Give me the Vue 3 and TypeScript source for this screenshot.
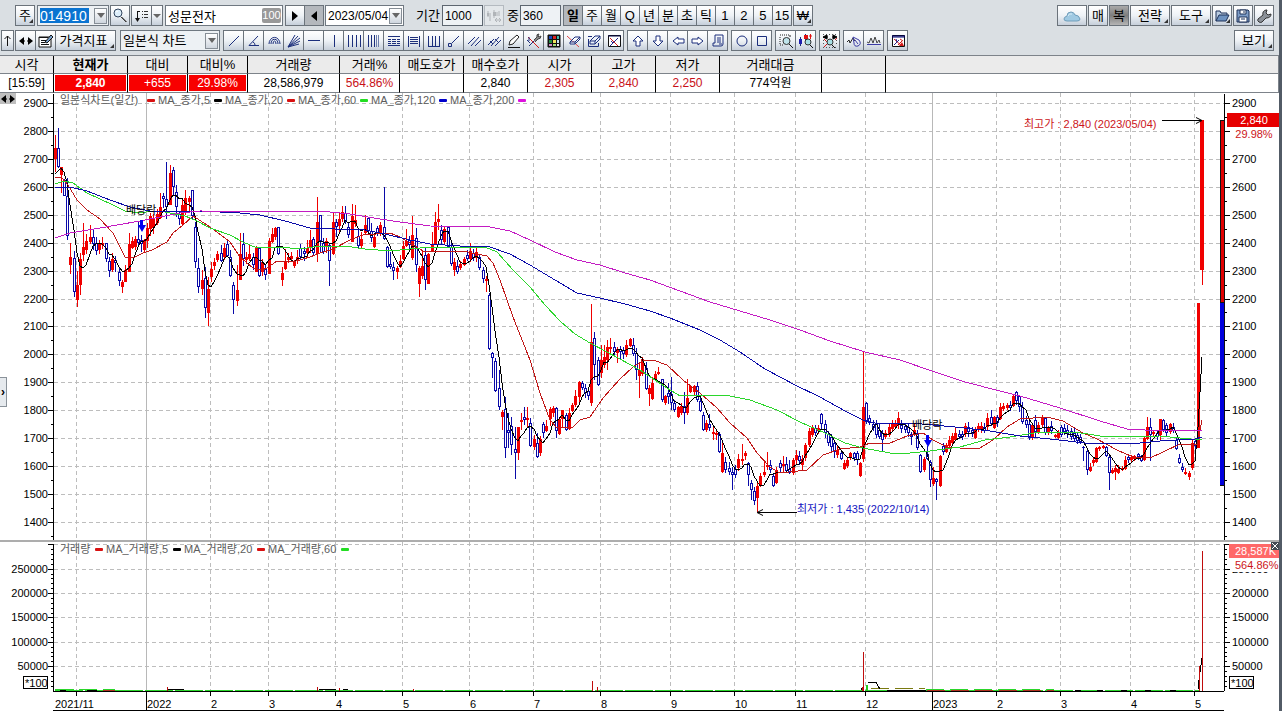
<script setup lang="ts">
import { h, ref } from 'vue'

type Shape = [d: string, stroke?: string, fill?: string]

const NAVY = '#1c2f7c'
const icons: Record<string, Shape[]> = {
  search: [['M9 9l5 5', '#3b3b3b'], ['M10 9l5 5', '#777'], ['M2 5a4 4 0 1 0 8 0a4 4 0 1 0-8 0', '#30435c', '#dceefa'], ['M4 4l2-1', '#fff']],
  sortList: [['M3.500 3v10M6 3.500H3.500', '#111'], ['M1 10h5l-2.500 4z', 'none', '#111'], ['M8 3.500h1M10 3.500h4M8 6.500h1M10 6.500h4M8 9.500h1M10 9.500h4', '#333']],
  play: [['M5 3v10l6-5z', 'none', '#000']],
  back: [['M11 3v10l-6-5z', 'none', '#000']],
  spread: [['M2 3v6M4 5v8M8 2v8M11 4v4M13 3v5M9 12h6M11 10l-2 2l2 2M13 10l2 2l-2 2', '#b0b4b8'], ['M1 5h2v3h-2zM7 4h3v4h-3z', 'none', '#b0b4b8']],
  cloud: [['M5 13q-3 0-3-2q0-2 3-3q0-4 4-4q3 0 4 3q4 0 5 4q0 2-3 2z', '#6f9dba', '#9fc9e2'], ['M6 8q1-3 4-2', '#d8edf7']],
  folder: [['M2 13V3h4l1 2h6v2', '#1d3158', '#b9cbe0'], ['M2 13l3-6h10l-3 6z', '#1d3158', '#6d92c0']],
  save: [['M2 2h11l1 1v11H2z', '#1d3158', '#7d9cc6'], ['M5 2h6v4H5z', '#1d3158', '#fff'], ['M4 9h8v5H4z', '#1d3158', '#fff'], ['M9 3v2M6 11h4', '#1d3158']],
  wrench: [['M3 14q-2-1-1-3l5-4q-1-4 3-5l1 0l-1 3l2 2l3-1q0 4-5 4l-4 4q-1 1-3 0z', '#333', '#8b9198']],
  upThin: [['M5.500 13V3M2.500 6l3-3l3 3', '#111']],
  leftRight: [['M6 4v8l-5-4zM10 4v8l5-4z', 'none', '#000'], ['M5 8h2M9 8h2', '#000']],
  edit: [['M1 4h12v10H1z', '#111', '#fff'], ['M1 4.500h9', '#111'], ['M3 7.500h5M3 9.500h4M3 11.500h8', '#111'], ['M7 9l6-7l2 2l-6 6z', '#111', '#7aa3cf']],
  line: [['M3 13L13 3', NAVY]],
  angle: [['M12 3L3 12.500h10M7 9q2 1 2 3', NAVY]],
  arcs: [['M3 11a5 6 0 0 1 11 0M5 11a3 4 0 0 1 7 0M7 11a1 2 0 0 1 3 0', NAVY]],
  fan: [['M2 14L9 2M2 14L12 3M2 14L14 5M2 14L14 8M2 14L13 11', NAVY]],
  hline: [['M2 7.500h12', NAVY]],
  vline: [['M8.500 2v12', NAVY]],
  bars: [['M2.500 2v12M6.500 2v12M10.500 2v12M14.500 2v12', NAVY]],
  barsDense: [['M2.500 2v12M5.500 2v12M8.500 2v12', NAVY], ['M10.500 2v12M12.500 2v12', '#6d7fae']],
  dashes: [['M2 3.500h12M2 12.500h12', NAVY], ['M2 6.500h3M6 6.500h4M11 6.500h3M2 8.500h3M6 8.500h4M11 8.500h3M2 10.500h3M6 10.500h4M11 10.500h3', NAVY]],
  hlines: [['M2.500 3v11M13.500 3v11M4 4.500h8M4 6.500h8M4 8.500h8M4 10.500h8', NAVY]],
  cup: [['M2.500 3v10M6.500 3v10M9.500 3v10M13.500 3v10M2 13.500h12', NAVY]],
  node: [['M6 10L13 3M2.500 10.500h3v3h-3z', NAVY]],
  diag: [['M2 11L9 4M5 13L13 4M9 13L15 7', NAVY]],
  diagCross: [['M2 12L8 6M5 13L13 4M9 13L15 7M4 8l3 3M9 6l3 3', NAVY]],
  pencil: [['M3 12l1-4l7-6l2 2l-6 7z', '#222', '#fff'], ['M2 14.500h12', '#111']],
  tools: [['M2 4L13 15', '#d31818'], ['M3 13L11 5', NAVY], ['M8 7l3-3q-1-3 2-3l-1 2l1 1l2-1q0 3-3 3l-3 3', '#444', '#888'], ['M3 4v4M1 7l3 3', NAVY]],
  palette: [['M2 2h12v12h-12z', '#111', '#111'], ['M3 3h3v3h-3z', 'none', '#1b49bd'], ['M7 3h3v3h-3z', 'none', '#d22'], ['M11 3h2v3h-2z', 'none', '#41b8ac'], ['M3 7h3v3h-3z', 'none', '#228a42'], ['M7 7h3v3h-3z', 'none', '#f0e15a'], ['M11 7h2v3h-2z', 'none', '#c7e6f7'], ['M3 11h3v2h-3z', 'none', '#d38ac9'], ['M7 11h3v2h-3z', 'none', '#a0dc7a'], ['M11 11h2v2h-2z', 'none', '#eee']],
  eraser: [['M1 3L13 14', '#dd4444'], ['M4 9l5-5h5l-5 5zM4 9v2h5l5-5V4M9 9v2', NAVY, '#fff']],
  eraserBox: [['M2.500 6v7.500h10V10', NAVY], ['M4 8l5-5h5l-5 5zM4 8v3h5l5-5V3M9 8v3', NAVY, '#e8f0fa'], ['M2 3.500h4', NAVY]],
  windowX: [['M2.500 2.500h12v11h-12z', '#111', '#fff'], ['M2 3h13', '#08084a'], ['M4 5l8 8', '#d31818'], ['M4 13l8-8M5 8l2 2', '#25258c']],
  up: [['M8 3l5 5h-3v5h-4v-5h-3z', NAVY, '#fff']],
  down: [['M8 13l5-5h-3v-5h-4v5h-3z', NAVY, '#fff']],
  left: [['M3 8l5-4v2h6v4h-6v2z', NAVY, '#fff']],
  right: [['M13 8l-5-4v2h-6v4h6v2z', NAVY, '#fff']],
  scroll: [['M5 2h8v9q0 2-2 2h-8v-3h2zM7 5h4M7 7h4M7 9h4M9 11h3', NAVY]],
  circle: [['M3 8a5 5 0 1 0 10 0a5 5 0 1 0-10 0', NAVY]],
  square: [['M3.500 3.500h9v9h-9z', NAVY]],
  zoomBox: [['M2 2h1M4 2h1M6 2h1M8 2h1M10 2h1M2 4v1M2 6v1M2 8v1M2 10v1M2 12h1M4 12h1M12 2v2', '#222'], ['M5 8a3 3 0 1 0 7 0a3 3 0 1 0-7 0', '#333', '#bfe3ea'], ['M11 11l4 4', '#1a1a1a']],
  zoomCandle: [['M2.500 4v9M7.500 1v8', NAVY], ['M1 6h3v5h-3z', 'none', '#2020b0'], ['M6 2h4v4h-4z', 'none', '#e01010'], ['M12.500 1v5M11 3h3', '#e01010'], ['M7 9a3 3 0 1 0 6 0a3 3 0 1 0-6 0', '#333', '#a7dfe5'], ['M12 12l3 3', '#111']],
  zoomAll: [['M1 1.500h1M4 1.500h1M7 1.500h1M10 1.500h1M13 1.500h1M1 14.500h1M4 14.500h1M7 14.500h1M10 14.500h1M13 14.500h1M1.500 4v1M1.500 7v1M1.500 10v1M14.500 7v1M14.500 10v1', '#555'], ['M2 14L5 11M13 7l2-2M2 6l3 3', '#d31818'], ['M2 4h4M10 4h4M5 2v4l-4-2zM11 2v4l4-2z', '#000', '#000'], ['M5 9a3 3 0 1 0 6 0a3 3 0 1 0-6 0', '#333', '#a7dfe5'], ['M10 12l3 3', '#111']],
  waveCircle: [['M1 9l2-2l1 3l3-5l2 3', '#222'], ['M7 4l6 3q3 4-1 6q-4 1-4-3zM9 7l3 4', '#3b3ba5']],
  wave: [['M1 9l2 1l2-5l2 5l2-6l2 6l2-3l1 3', '#444'], ['M1 11.500h14', '#3b3ba5']],
  windowRed: [['M2.500 2.500h12v11h-12z', '#111', '#fff'], ['M2 3h13M2 4h13', '#00006a'], ['M4 6l8 7M10 6l3 2M8 12l4-4', '#d31818'], ['M4 12l5-5M6 6l1 3', '#25258c'], ['M9 13l3-4l2 4z', 'none', '#d31818']],
}

const Icon = (p: { name: string; w?: number }) =>
  h('svg', { class: 'icon', width: p.w ?? 16, height: 16, viewBox: `0 0 ${p.w ?? 16} 16`, 'aria-hidden': 'true' },
    icons[p.name].map(([d, stroke, fill]) => h('path', { d, stroke: stroke ?? '#000', fill: fill ?? 'none' })))
Icon.props = ['name', 'w']

const drawGroups: string[][] = [
  ['line', 'angle', 'arcs', 'fan', 'hline', 'vline', 'bars', 'barsDense', 'dashes', 'hlines', 'cup', 'node', 'diag', 'diagCross', 'pencil', 'tools', 'palette', 'eraser', 'eraserBox', 'windowX'],
  ['up', 'down', 'left', 'right', 'scroll'],
  ['circle', 'square'],
  ['zoomBox', 'zoomCandle'],
  ['zoomAll'],
  ['waveCircle', 'wave'],
  ['windowRed'],
]

const periods = ['일', '주', '월', 'Q', '년', '분', '초', '틱', '1', '2', '5', '15']
const period = ref('일')
const code = ref('014910')
const stockName = ref('성문전자')
const date = ref('2023/05/04')
const total = ref('1000')
const shown = ref('360')

interface Quote { label: string; value: string; tone?: string; col: string }
const quotes: Quote[] = [
  { label: '시각', value: '[15:59]', col: 'w54' },
  { label: '현재가', value: '2,840', tone: 'solid strong', col: 'w74' },
  { label: '대비', value: '+655', tone: 'solid', col: 'w60' },
  { label: '대비%', value: '29.98%', tone: 'solid', col: 'w60' },
  { label: '거래량', value: '28,586,979', col: 'w92' },
  { label: '거래%', value: '564.86%', tone: 'rise', col: 'w60' },
  { label: '매도호가', value: '', col: 'w64' },
  { label: '매수호가', value: '2,840', col: 'w64' },
  { label: '시가', value: '2,305', tone: 'rise', col: 'w64' },
  { label: '고가', value: '2,840', tone: 'rise', col: 'w64' },
  { label: '저가', value: '2,250', tone: 'rise', col: 'w64' },
  { label: '거래대금', value: '774억원', col: 'w102' },
  { label: '', value: '', col: 'w64' },
  { label: '', value: '', col: 'rest' },
]

const LEFT = 53
const RIGHT = 1224
const months = [
  { x: 76, t: '2021/11', tx: 55 }, { x: 146, t: '2022', year: true }, { x: 210, t: '2' }, { x: 268, t: '3' },
  { x: 335, t: '4' }, { x: 402, t: '5' }, { x: 469, t: '6' }, { x: 533, t: '7' }, { x: 600, t: '8' },
  { x: 670, t: '9' }, { x: 734, t: '10' }, { x: 795, t: '11' }, { x: 865, t: '12' }, { x: 932, t: '2023', year: true },
  { x: 996, t: '2' }, { x: 1060, t: '3' }, { x: 1130, t: '4' }, { x: 1194, t: '5' },
]

const priceY = (p: number) => Math.round(103 + (2900 - p) * 0.2793)
const prices = Array.from({ length: 16 }, (_, i) => 2900 - i * 100)
const priceMinor = Array.from({ length: 16 }, (_, i) => 2850 - i * 100)
const volY = (v: number) => Math.round(690.500 - v * 0.000487)
const volumes = [250000, 200000, 150000, 100000, 50000]
const volMinor = Array.from({ length: 30 }, (_, i) => (i + 1) * 10000)

// One entry per day: direction + x, high, body top, body bottom, low.
const daily = `
r55,135,148,159,172 b58,128,148,167,168 r61,167,167,175,193 b64,179,180,196,196 b67,178,196,236,240 r70,243,257,265,274
b74,251,258,292,297 r77,271,285,300,307 r80,253,259,285,295 r83,223,247,255,261 r86,234,241,250,254 r90,225,237,242,244
b93,229,237,244,250 b96,237,243,251,255 r99,240,244,250,254 r102,237,243,245,249 b106,243,243,259,262 b109,257,261,271,277
r112,253,259,270,272 b115,256,260,263,272 b119,268,272,281,286 r122,280,282,287,293 r125,265,270,282,282 r129,233,244,272,272
r132,237,241,248,249 r135,236,239,247,250 b138,222,239,243,247 b141,235,240,244,252 r144,239,240,250,252 r147,223,228,241,248
r150,213,216,229,236 r153,214,218,228,234 r157,209,214,223,225 r160,193,207,218,219 b163,193,196,199,208 b166,162,199,207,219
r170,165,173,205,205 b173,167,170,187,196 b176,185,192,207,217 b179,212,214,219,225 r182,198,205,224,225 r185,190,198,213,215
r189,196,198,202,212 b192,190,190,216,219 b195,222,227,262,268 b198,258,268,287,293 r202,270,280,289,295 b205,267,278,308,318
r208,277,289,313,326 r211,262,269,277,282 r214,258,262,266,270 r217,251,254,260,262 b221,245,253,261,262 r224,243,248,257,260
b227,241,244,256,257 b230,250,257,276,277 b233,282,285,300,314 r237,265,290,301,306 r240,233,254,280,280 b243,233,244,259,266
r246,252,257,260,264 r249,245,254,259,261 b253,253,257,265,270 r256,246,248,272,272 b259,247,248,276,277 r262,259,262,272,276
b265,264,269,275,280 r269,238,241,274,274 r272,228,234,242,243 r275,227,228,237,240 b278,227,227,254,255 r282,267,273,280,286
r285,249,262,269,270 r288,253,257,260,263 r291,252,256,259,262 r294,260,262,266,268 r297,250,257,260,264 b300,244,248,257,260
b304,247,251,254,261 r307,240,248,253,257 r310,230,240,248,253 b313,237,239,253,255 r317,197,222,254,262 b320,215,215,241,252
b323,238,243,252,254 r326,238,241,246,253 b329,243,245,261,286 r333,212,222,254,255 b336,219,222,227,237 r339,212,219,226,232
r342,206,212,219,222 b345,206,213,221,224 b348,222,227,235,238 r352,204,216,242,242 r355,205,220,224,227 b358,230,236,246,249
r361,232,239,246,248 r365,215,225,233,234 b368,217,218,231,233 b371,223,231,238,242 r374,235,237,247,248 b377,226,228,234,236
r380,222,225,234,236 b384,187,227,239,240 b387,246,247,267,268 b390,252,264,267,269 b393,262,267,271,280 r397,266,268,272,279
r400,255,261,267,268 r403,241,246,259,260 r406,229,241,246,247 b409,236,240,245,250 r412,216,235,258,260 b416,228,238,265,272
r419,266,268,284,297 r422,250,266,276,279 b425,248,255,280,290 r428,253,254,284,284 r432,232,245,251,252 r435,212,222,244,245
r438,204,219,222,230 b441,225,230,240,244 r444,226,229,242,244 b448,227,227,247,248 b451,240,247,264,266 r454,258,262,270,276
b457,260,266,272,274 r460,261,264,268,270 r464,257,259,265,266 b467,250,255,259,261 r470,243,251,259,262 b473,249,253,258,261
r476,248,252,258,262 b479,255,257,268,270 b483,267,270,279,283 r486,276,279,281,292 b489,293,295,349,350 b492,352,353,358,378
b495,358,361,391,392 b499,370,388,407,410 r502,410,412,417,430 b505,397,409,448,458 b508,413,430,433,448 b511,417,426,445,455
b515,427,449,453,479 r518,427,427,453,460 r521,413,420,422,430 b524,407,417,420,425 r527,407,418,420,427 b530,418,423,446,447
r534,435,439,447,450 b537,433,443,457,458 r540,436,439,453,456 b543,422,424,433,438 r546,420,426,431,432 r550,407,409,419,426
r553,406,408,413,417 b556,407,408,431,438 r559,417,419,434,435 r562,410,410,419,428 b566,413,415,430,431 r569,408,413,429,430
r572,403,405,411,412 r575,390,396,405,407 r579,381,382,397,402 b582,381,383,388,390 b585,384,388,393,398 b588,387,391,396,400
r591,304,342,403,406 b594,332,338,365,380 b598,357,360,385,386 r601,345,360,373,378 r604,345,357,365,368 r607,340,347,360,370
r610,338,347,349,353 b614,342,347,352,355 r617,347,349,353,363 b620,346,349,352,360 b623,347,350,354,359 r626,340,345,355,357
r630,338,339,346,347 b633,338,345,354,356 b636,348,353,370,380 r639,363,370,376,398 r642,357,359,374,376 b646,362,368,389,390
r649,385,388,394,406 r652,377,383,399,400 r655,371,374,379,380 r658,367,372,374,375 b662,379,379,400,402 r665,395,396,403,405
b668,383,393,397,404 b671,377,394,403,410 b674,400,403,410,412 r678,406,407,417,418 r681,403,406,413,415 b684,392,406,413,424
r687,379,398,413,415 r690,385,386,392,393 r694,385,386,392,396 b697,382,386,400,402 b700,395,401,411,412 b703,412,415,430,431
r706,420,423,430,432 b709,414,424,428,431 r713,427,432,434,440 r716,431,433,435,440 b719,432,434,452,453 r722,443,453,472,473
b725,457,462,470,473 b729,462,468,472,475 b732,467,472,475,490 b735,465,469,475,478 r738,454,459,468,471 r742,444,459,461,465
r745,451,453,456,460 b748,462,463,475,486 b751,480,483,490,500 b754,487,491,501,505 r757,482,486,498,512 r760,473,476,485,487
r764,462,472,475,477 r767,452,465,467,470 b770,460,465,470,473 b773,474,476,486,487 r776,467,470,483,484 b780,460,463,468,472
r783,456,464,466,472 b786,457,464,471,473 b789,460,469,473,474 r793,458,460,473,475 r796,450,455,460,465 b799,451,456,461,465
r802,455,459,465,471 r805,443,445,458,461 r809,428,431,445,447 r812,425,427,435,437 b815,425,428,433,436 r818,425,428,431,434
b821,413,414,424,430 b825,420,424,433,438 b828,431,434,443,446 b831,434,437,447,453 b834,440,443,452,458 r837,445,450,455,458
b841,452,453,459,460 r844,460,463,469,470 r847,458,460,466,468 r850,452,453,458,460 b854,452,453,458,461 b857,451,453,460,465
r860,462,463,476,477 r863,352,407,459,462 b866,402,403,421,424 b869,415,418,423,425 b873,420,424,428,431 b876,420,424,435,438
b879,424,430,437,439 b882,430,433,440,452 r885,430,433,437,439 r889,423,427,435,437 r892,420,423,429,431 r895,420,423,427,428
r898,412,418,425,429 b901,420,425,429,433 b905,423,426,430,433 b908,424,427,433,437 b911,432,434,437,445 r914,423,430,434,436
b917,430,433,448,450 b920,454,455,472,473 r924,457,459,470,472 b927,446,454,459,460 b930,460,462,480,487 r933,467,478,484,486
b936,478,479,482,500 r940,455,456,486,487 b943,443,446,452,455 r946,443,445,452,453 r949,436,440,446,448 r952,433,436,443,445
r955,427,433,440,441 b959,430,434,437,439 b962,431,434,437,440 r965,423,426,434,437 b968,422,427,432,437 b972,427,430,434,437
r975,427,429,438,439 r978,423,426,430,432 r981,422,426,430,433 b984,423,427,431,433 r987,413,418,427,430 b991,410,417,424,426
r994,416,417,428,429 b997,415,417,423,427 r1000,403,407,419,420 r1003,403,406,409,411 r1007,403,405,408,410 b1010,401,405,408,411
r1013,395,396,406,407 b1016,391,392,401,405 b1019,395,396,407,412 b1022,402,407,422,424 b1026,416,420,425,428 b1029,420,424,438,440
r1032,423,425,438,440 b1035,415,420,432,437 r1038,422,425,432,434 r1042,415,418,425,427 b1045,417,418,433,435 r1048,426,428,433,435
b1051,421,426,431,434 r1055,434,435,437,438 r1058,430,432,438,439 b1061,425,427,435,437 b1064,424,428,432,435 b1067,425,430,434,438
b1071,428,431,437,440 b1074,427,433,439,442 b1077,432,435,441,444 b1080,434,437,442,444 b1083,446,447,448,461 b1087,450,451,470,475
r1090,463,467,471,472 r1093,458,460,463,466 r1096,447,448,462,463 r1099,446,447,449,451 r1103,445,446,448,449 b1106,446,447,456,457
b1109,456,457,473,490 r1112,468,470,473,474 r1115,465,468,472,480 r1118,465,469,473,474 r1122,466,468,470,471 r1125,456,460,469,470
b1128,455,457,460,463 r1131,455,457,460,463 r1134,455,456,459,461 b1138,453,454,457,460 b1141,455,456,461,462 r1144,437,438,460,461
r1147,417,427,439,440 b1150,418,427,435,461 r1153,430,432,434,437 b1157,431,433,437,440 r1160,419,419,435,440 b1163,419,420,430,432
b1166,423,425,433,437 r1170,423,424,432,434 b1173,423,427,431,433 b1176,438,440,449,450 b1179,454,458,463,464 b1182,463,467,470,472
r1185,468,472,474,475 r1189,471,473,477,480 r1192,440,443,468,470 b1195,438,441,446,452 r1198,303,303,448,448 r1202,120,120,270,285`

interface Candle { up: boolean; x: number; hi: number; top: number; bot: number; lo: number; close: number }
const candles: Candle[] = daily.trim().split(/\s+/).map((s) => {
  const [x, hi, top, bot, lo] = s.slice(1).split(',').map(Number)
  const up = s[0] === 'r'
  return { up, x, hi, top, bot, lo, close: up ? top : bot }
})
const box = (x: number, y: number, w: number, ht: number) => `M${x} ${y}h${w}v${ht}h${-w}z`
const shape = (up: boolean) => candles.filter((c) => c.up === up)
  .map((c) => box(c.x, c.hi, 1, Math.max(1, c.lo - c.hi)) + box(c.x - 1, c.top, 3, Math.max(1, c.bot - c.top))).join('')
const upPath = shape(true) + box(1200, 120, 4, 150) + box(1197, 303, 3, 145)
const downPath = shape(false)
const hollowPath = candles.filter((c) => !c.up && c.bot - c.top > 2)
  .map((c) => box(c.x, c.top + 1, 1, c.bot - c.top - 2)).join('')

const ma5 = candles.map((c, i) => {
  const part = candles.slice(Math.max(0, i - 4), i + 1)
  const sum = part.reduce((s, k) => s + k.close, 0)
  return `${c.x},${Math.round((sum + 180 * (5 - part.length)) / 5)}`
}).join(' ')

const averages = [
  { c: '#000', p: ma5 },
  { c: '#c01818', p: '55,177 62,178 68,185 77,200 87,210 100,219 113,233 125,257 133,258 143,253 152,250 167,242 173,233 183,225 193,216 207,225 217,232 230,242 240,257 253,268 262,270 267,268 277,261 293,262 310,257 320,253 333,249 350,240 363,235 390,233 400,237 410,243 423,251 463,251 477,254 487,256 493,263 500,280 513,317 530,360 540,393 550,420 557,428 573,427 580,420 590,417 603,398 620,379 633,367 643,361 653,360 667,365 683,380 700,393 717,408 730,423 747,438 757,453 770,467 780,473 807,470 823,455 840,449 860,447 870,443 890,443 907,436 923,433 933,440 947,447 960,448 980,448 993,440 1007,427 1020,419 1047,417 1063,421 1083,433 1097,439 1117,450 1133,457 1150,458 1163,452 1180,444 1197,445 1200,430 1202,420' },
  { c: '#2bd62b', p: '55,184 64,181 73,183 87,193 100,199 113,205 125,211 140,213 153,211 165,212 185,216 197,221 210,228 230,235 243,242 257,248 280,247 300,249 320,246 345,246 365,249 390,251 420,248 450,247 485,247 497,252 513,270 530,287 545,305 560,321 575,334 590,343 605,351 620,359 640,370 655,380 667,388 680,396 700,395 730,396 750,400 777,410 800,422 825,433 845,443 863,448 890,453 910,453 930,451 960,447 985,440 1010,437 1040,432 1075,432 1100,436 1120,437 1160,436 1180,438 1202,440' },
  { c: '#0b0ba8', p: '55,188 70,187 87,191 110,200 130,207 150,211 175,211 200,211 240,213 260,215 285,221 310,228 335,229 360,229 385,234 410,240 430,244 460,246 490,247 510,254 530,265 555,280 577,293 600,298 625,304 650,311 670,318 700,330 720,340 740,352 765,369 795,385 820,397 845,411 865,421 875,423 910,423 933,425 955,427 990,431 1020,436 1050,439 1085,443 1140,443 1160,441 1195,439 1202,437' },
  { c: '#c31bc3', p: '55,238 70,233 100,228 140,221 165,216 180,213 200,211 330,212 350,214 380,219 400,222 430,226 490,227 510,231 530,240 555,252 577,260 600,265 625,273 650,280 680,291 710,302 740,311 770,320 800,330 830,341 865,352 900,360 935,372 965,382 1000,391 1020,396 1060,408 1100,421 1127,429 1145,430 1170,430 1202,430' },
]

const priceLegend = [
  { x: 60, t: '일본식차트(일간)', m: 147, c: '#d81010' }, { x: 158, t: 'MA_종가,5', m: 214, c: '#000' },
  { x: 225, t: 'MA_종가,20', m: 287, c: '#d81010' }, { x: 298, t: 'MA_종가,60', m: 360, c: '#22dd22' },
  { x: 371, t: 'MA_종가,120', m: 439, c: '#0000cc' }, { x: 450, t: 'MA_종가,200', m: 518, c: '#dd11dd' },
]
const volLegend = [
  { x: 60, t: '거래량', m: 95, c: '#d81010' }, { x: 106, t: 'MA_거래량,5', m: 173, c: '#000' },
  { x: 184, t: 'MA_거래량,20', m: 257, c: '#d81010' }, { x: 268, t: 'MA_거래량,60', m: 341, c: '#22dd22' },
]
const exDays = [{ x: 141, y: 214 }, { x: 927, y: 429 }]
const spikes = [[167, 687], [317, 687], [339, 688], [413, 689], [592, 681], [597, 687], [863, 652], [862, 687], [1199, 666], [1202, 551]]
</script>

<template>
  <main class="window">
    <header class="tools">
      <div class="row">
        <button class="btn more first">주</button>
        <div class="combo code">
          <input v-model="code" aria-label="종목코드" class="picked" />
          <button class="drop" aria-label="종목 목록"></button>
        </div>
        <button class="btn sq" aria-label="종목 검색"><Icon name="search" /></button>
        <div class="group">
          <button class="btn" aria-label="정렬"><Icon name="sortList" /></button>
          <button class="btn slim" aria-label="정렬 목록"><span class="tri"></span></button>
        </div>
        <div class="combo name">
          <input v-model="stockName" aria-label="종목명" />
          <span class="badge">100</span>
        </div>
        <div class="group gap">
          <button class="btn sq" aria-label="다음"><Icon name="play" /></button>
          <button class="btn sq on" aria-label="이전"><Icon name="back" /></button>
        </div>
        <div class="combo date">
          <input v-model="date" aria-label="날짜" />
          <button class="drop" aria-label="달력"></button>
        </div>
        <label class="lbl far" for="total">기간</label>
        <input id="total" v-model="total" class="box" />
        <button class="btn sq faint" aria-label="간격" disabled><Icon name="spread" /></button>
        <label class="lbl mid" for="shown">중</label>
        <input id="shown" v-model="shown" class="box" />
        <div class="group periods">
          <button v-for="p in periods" :key="p" class="btn" :class="{ on: p === period }" @click="period = p">{{ p }}</button>
        </div>
        <button class="btn more sq">₩</button>
        <div class="end">
          <button class="btn wide30" aria-label="클라우드"><Icon name="cloud" :w="20" /></button>
          <button class="btn sq">매</button>
          <button class="btn sq dark">복</button>
          <button class="btn more wide41">전략</button>
          <button class="btn more wide41">도구</button>
          <button class="btn more sq" aria-label="열기"><Icon name="folder" /></button>
          <button class="btn sq" aria-label="저장"><Icon name="save" /></button>
          <button class="btn sq" aria-label="설정"><Icon name="wrench" /></button>
        </div>
      </div>
      <div class="row second">
        <button class="btn slim13" aria-label="위로"><Icon name="upThin" :w="11" /></button>
        <div class="group">
          <button class="btn" aria-label="좌우"><Icon name="leftRight" /></button>
          <button class="btn" aria-label="편집"><Icon name="edit" /></button>
          <button class="btn more index">가격지표</button>
        </div>
        <div class="combo kind">
          <select aria-label="차트 종류"><option>일본식 차트</option></select>
          <span class="drop" aria-hidden="true"></span>
        </div>
        <div v-for="(g, i) in drawGroups" :key="i" class="group draw">
          <button v-for="n in g" :key="n" class="btn" :aria-label="n"><Icon :name="n" /></button>
        </div>
        <div class="end"><button class="btn more wide41">보기</button></div>
      </div>
    </header>

    <table class="quote">
      <colgroup><col v-for="(q, i) in quotes" :key="i" :class="q.col" /></colgroup>
      <thead>
        <tr><th v-for="(q, i) in quotes" :key="i" scope="col" :class="{ strong: i === 1 }">{{ q.label }}</th></tr>
      </thead>
      <tbody>
        <tr><td v-for="(q, i) in quotes" :key="i"><span :class="q.tone">{{ q.value }}</span></td></tr>
      </tbody>
    </table>

    <section class="pane">
      <svg class="chart" viewBox="0 93 1279 447" role="img" aria-label="일본식차트(일간)">
        <g class="crisp">
          <path v-for="p in prices" :key="p" class="grid" :d="`M54 ${priceY(p)}.5H${RIGHT}`" />
          <path v-for="m in months" :key="m.x" :class="m.year ? 'yearline' : 'grid'" :d="`M${m.x}.5 93V540`" />
          <path :d="upPath" fill="#f00000" />
          <path :d="downPath" fill="#0a0aa8" />
          <path :d="hollowPath" fill="#fff" />
          <polyline v-for="a in averages" :key="a.c" :points="a.p" fill="none" :stroke="a.c" />
          <path class="axis" :d="`M${LEFT}.5 94V540M${RIGHT}.5 94V540`" />
          <path v-for="p in prices" :key="p" class="axis" :d="`M48 ${priceY(p)}.5H53M${RIGHT} ${priceY(p)}.5h6`" />
          <path v-for="p in priceMinor" :key="p" class="axis" :d="`M51 ${priceY(p)}.5H53M${RIGHT} ${priceY(p)}.5h3`" />
          <rect x="1220" y="120" width="5" height="183" fill="#111" />
          <rect x="1221" y="121" width="3" height="181" fill="#e00000" />
          <rect x="1220" y="302" width="5" height="184" fill="#111" />
          <rect x="1220" y="303" width="4" height="182" fill="#0000dd" />
          <rect x="1227" y="113" width="52" height="14" fill="#e60000" />
        </g>
        <g>
          <text v-for="p in prices" :key="p" class="num" x="48" :y="priceY(p) + 4" text-anchor="end">{{ p }}</text>
          <template v-for="p in prices" :key="p">
            <text v-if="p !== 2800" class="num" x="1232" :y="priceY(p) + 4">{{ p }}</text>
          </template>
          <text class="num white" x="1254" y="124" text-anchor="middle">2,840</text>
          <text class="num red" x="1254" y="138" text-anchor="middle">29.98%</text>
          <g v-for="l in priceLegend" :key="l.x">
            <text class="legend" :x="l.x" y="104">{{ l.t }}</text>
            <rect :x="l.m" y="99" width="8" height="3" rx="1" :fill="l.c" />
          </g>
          <text class="note red" x="1024" y="128">최고가 : 2,840 (2023/05/04)</text>
          <path class="arrow" d="M1162 120.500H1201M1196 117.500l6 3l-6 3" />
          <text class="note blue" x="797" y="513">최저가 : 1,435 (2022/10/14)</text>
          <path class="arrow" d="M797 512.500H758M763 509.500l-6 3l6 3" />
          <g v-for="e in exDays" :key="e.x">
            <text class="note" :x="e.x - 15" :y="e.y">배당락</text>
            <path :d="`M${e.x - 1} ${e.y + 6}h3v5h3l-4 7l-4 -7h2z`" fill="#0000f0" />
          </g>
        </g>
      </svg>
      <button class="flip" aria-label="좌우 이동"><Icon name="leftRight" /></button>
      <button class="expand" aria-label="펼치기">›</button>
    </section>
    <div class="split"></div>
    <section class="pane">
      <svg class="chart" viewBox="0 542 1279 169" role="img" aria-label="거래량">
        <g class="crisp">
          <path class="grid" :d="`M54 544.500H${RIGHT}`" />
          <path v-for="v in volumes" :key="v" class="grid" :d="`M54 ${volY(v)}.5H${RIGHT}`" />
          <path v-for="m in months" :key="m.x" :class="m.year ? 'yearline' : 'grid'" :d="`M${m.x}.5 542V691`" />
          <path class="axis" :d="`M${LEFT}.5 544V691M${RIGHT}.5 544V691M48 544.500H53M${RIGHT} 544.500h5`" />
          <path v-for="v in volumes" :key="v" class="axis" :d="`M48 ${volY(v)}.5H53M${RIGHT} ${volY(v)}.5h6`" />
          <path v-for="v in volMinor" :key="v" class="axis" :d="`M51 ${volY(v)}.5H53M${RIGHT} ${volY(v)}.5h3`" />
          <path class="axis" d="M53 691.500H1224M53 710.500H1224" />
          <path v-for="m in months" :key="m.x" class="axis" :d="`M${m.x}.5 691V${m.year ? 710 : 696}`" />
          <path d="M55 689.500H74M79 689.500H97M103 689.500H115" stroke="#2bd62b" />
          <path d="M55 690.500H1200" stroke="#2bd62b" stroke-dasharray="28 2" />
          <path d="M60 690.500H66M87 690.500H97M168 689.500H184M319 689.500H336M343 689.500H348M887 690.500H926M1075 690.500h6M1097 690.500h6M1121 690.500h6M1145 690.500h6M1170 690.500h6" stroke="#000" />
          <path d="M103 690.500H115M927 690.500H1054" stroke="#b03020" stroke-dasharray="18 6" />
          <path d="M871 688.500H925" stroke="#7a7a10" stroke-dasharray="18 6" />
          <path d="M926 689.500H1054" stroke="#2bd62b" stroke-dasharray="18 6" />
          <rect x="866" y="685" width="2" height="6" fill="#22cc22" />
          <path d="M861 690L864 686M868 682.500H876L880 689M1198 689L1200 672L1202 658" fill="none" stroke="#000" />
          <path v-for="s in spikes" :key="s[0]" :d="`M${s[0]}.5 ${s[1]}V691`" stroke="#c00c0c" />
        </g>
        <g>
          <text v-for="v in volumes" :key="v" class="num" x="48" :y="volY(v) + 4" text-anchor="end">{{ v }}</text>
          <text v-for="v in volumes" :key="v" class="num" x="1232" :y="volY(v) + 4">{{ v }}</text>
          <rect x="1231" y="558" width="48" height="14" fill="#fff" />
          <rect x="1229" y="544" width="50" height="14" fill="#ff6868" />
          <text class="num white" x="1235" y="555">28,587K</text>
          <text class="num red" x="1235" y="569">564.86%</text>
          <rect class="factor" x="23.500" y="676.500" width="24" height="12" />
          <text class="num" x="25" y="687">*100</text>
          <rect class="factor" x="1229.500" y="676.500" width="24" height="12" />
          <text class="num" x="1231" y="687">*100</text>
          <text v-for="m in months" :key="m.x" class="num" :x="m.tx ?? m.x + 1" y="708">{{ m.t }}</text>
          <g v-for="l in volLegend" :key="l.x">
            <text class="legend" :x="l.x" y="553">{{ l.t }}</text>
            <rect :x="l.m" y="548" width="8" height="3" rx="1" :fill="l.c" />
          </g>
        </g>
      </svg>
      <button class="close" aria-label="닫기">
        <svg viewBox="0 0 8 8" width="8" height="8"><path d="M1 1l6 6M7 1l-6 6" stroke="#fff" /></svg>
      </button>
    </section>
  </main>
</template>

<style>
body {
  margin: 0;
  background: #fff;
}
</style>

<style scoped>
.window {
  border-right: 3px solid #525b66;
  background: #fff;
  font-family: "Liberation Sans", "Noto Sans CJK KR", sans-serif;
  font-size: 12px;
  color: #000;
  overflow: hidden;
}
* {
  box-sizing: border-box;
}
button,
input,
select {
  font: inherit;
  color: inherit;
  margin: 0;
  padding: 0;
}
.tools {
  background: #dadfe3;
  padding: 5px 5px 4px 0;
}
.row {
  display: flex;
  align-items: center;
  height: 21px;
  gap: 1px;
  white-space: nowrap;
}
.second {
  margin-top: 4px;
  padding-left: 1px;
}
.btn {
  position: relative;
  flex: none;
  display: inline-flex;
  align-items: center;
  justify-content: center;
  width: 21px;
  height: 21px;
  border: 1px solid #6b737b;
  border-radius: 0;
  background: linear-gradient(#ffffff, #eef2f6 50%, #c6cfda);
  font-size: 13px;
  line-height: 18px;
}
.btn.sq {
  width: 20px;
}
.btn.on {
  background: #b4b8bd;
  font-weight: bold;
}
.btn.dark {
  background: linear-gradient(#a9a9a9, #7d7d7d 50%, #b5b5b5);
}
.btn.faint {
  border-color: #b4bac0;
  background: #e3e7ea;
}
.btn.more::after {
  content: "";
  position: absolute;
  right: 1px;
  bottom: 2px;
  border: 2px solid;
  border-color: transparent #333 #333 transparent;
}
.first {
  width: 20px;
  margin-left: 15px;
  margin-right: 1px;
}
.btn.slim {
  width: 12px;
}
.btn.slim13 {
  width: 13px;
}
.btn.wide30 {
  width: 30px;
}
.btn.wide41 {
  width: 40px;
}
.btn.index {
  width: 61px;
  padding-right: 4px;
}
.icon {
  flex: none;
  display: block;
}
.group {
  display: flex;
}
.group .btn + .btn {
  margin-left: -1px;
}
.gap {
  margin-left: 1px;
}
.draw {
  margin-left: 2px;
}
.tri {
  border: 4px solid transparent;
  border-top-color: #666;
  border-bottom: 0;
}
.combo {
  display: flex;
  align-items: center;
  height: 21px;
  border: 1px solid #6f7881;
  background: #fff;
  padding: 1px 1px 1px 2px;
}
.combo input {
  flex: 1;
  min-width: 0;
  width: 0;
  height: 17px;
  border: 0;
  background: none;
}
.combo .drop {
  flex: none;
  display: flex;
  align-items: center;
  justify-content: center;
  width: 13px;
  height: 16px;
  border: 1px solid #868e96;
  background: linear-gradient(#fff, #cfd6de);
}
.drop::before {
  content: "";
  border: 4px solid transparent;
  border-top: 5px solid #666;
  border-bottom: 0;
}
.code {
  width: 72px;
  background: #edf1f4;
}
.combo input.picked {
  flex: none;
  width: 49px;
  height: 15px;
  margin-right: auto;
  background: #0a74d1;
  color: #fff;
  font-size: 14px;
}
.name {
  width: 118px;
  margin-left: 1px;
}
.name input {
  font-size: 13px;
}
.badge {
  background: #999;
  color: #fff;
  border-radius: 2px;
  width: 19px;
  height: 15px;
  line-height: 15px;
  font-size: 11px;
  text-align: center;
}
.date {
  width: 79px;
}
.lbl {
  font-size: 13px;
  line-height: 18px;
}
.far {
  margin: 0 1px 0 11px;
}
.mid {
  margin: 0 0 0 2px;
}
.box {
  width: 41px;
  height: 21px;
  border: 1px solid #5d6670;
  border-radius: 0;
  background: #eef2f5;
  padding-left: 2px;
}
.periods {
  margin-left: 1px;
}
.periods .btn {
  width: 20px;
}
.end {
  margin-left: auto;
  display: flex;
  gap: 1px;
}
.kind {
  width: 100px;
  margin-left: 3px;
  background: #edf1f4;
}
.kind select {
  flex: 1;
  min-width: 0;
  border: 0;
  background: none;
  appearance: none;
  font-size: 13px;
  line-height: 16px;
  height: 17px;
}
.quote {
  width: 100%;
  table-layout: fixed;
  border-collapse: separate;
  border-spacing: 0;
  border-top: 1px solid #7d838a;
  border-right: 1px solid #7d838a;
  line-height: 16px;
}
.quote th,
.quote td {
  padding: 1px 0 0;
  text-align: center;
  font-weight: normal;
  border-right: 1px solid #000;
  border-bottom: 1px solid #7d838a;
  white-space: nowrap;
}
.quote th {
  height: 18px;
  background: #ebebeb;
  font-size: 13px;
}
.quote th.strong {
  font-weight: bold;
}
.quote td {
  height: 19px;
  padding: 1px;
}
.quote th:last-child,
.quote td:last-child {
  border-right: 0;
}
.quote span {
  display: block;
  height: 16px;
}
.solid {
  background: #f80000;
  color: #fff;
}
.quote .strong {
  font-weight: bold;
}
.quote .rise {
  color: #c81018;
}
.w54 { width: 54px; }
.w74 { width: 74px; }
.w60 { width: 60px; }
.w92 { width: 92px; }
.w64 { width: 64px; }
.w102 { width: 102px; }
.pane {
  position: relative;
}
.chart {
  display: block;
  width: 100%;
  height: auto;
}
.crisp {
  shape-rendering: crispEdges;
}
.grid {
  stroke: #bdbdbd;
  stroke-dasharray: 4 3;
}
.yearline {
  stroke: #b8b8b8;
}
.axis {
  stroke: #000;
}
.arrow {
  stroke: #000;
  fill: none;
}
.num,
.note,
.legend {
  font-size: 11px;
}
.legend {
  fill: #5c5c5c;
}
.red {
  fill: #cc1420;
}
.blue {
  fill: #1414c0;
}
.white {
  fill: #fff;
}
.factor {
  fill: #fff;
  stroke: #000;
}
.split {
  height: 2px;
  background: #adadad;
}
.flip {
  position: absolute;
  left: 0;
  top: 0;
  width: 16px;
  height: 11px;
  border: 0;
  background: #bfbfbf;
  display: flex;
  align-items: center;
  justify-content: center;
  overflow: hidden;
}
.expand {
  position: absolute;
  left: 0;
  top: 284px;
  width: 7px;
  height: 30px;
  border: 1px solid #8a929a;
  border-left: 0;
  background: #e6eaee;
  font-weight: bold;
  line-height: 26px;
}
.close {
  position: absolute;
  right: 0;
  top: 0;
  width: 8px;
  height: 8px;
  border: 0;
  background: #444b54;
}
.close svg {
  display: block;
}
</style>
